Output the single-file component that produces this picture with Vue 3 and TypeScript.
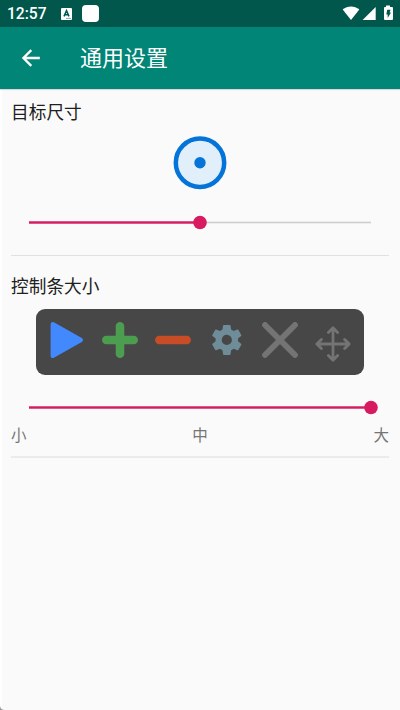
<script setup lang="ts">
import { ref } from 'vue'

const trackLength = 342
const targetSize = ref<number>(50)
const barSize = ref<number>(100)
const sizeLabels: string[] = ['小', '中', '大']

const position = (percent: number): number => (trackLength * percent) / 100
</script>

<template>
  <div class="screen">
    <header class="status">
      <span class="clock">12:57</span>
      <svg class="keyboard" width="11" height="12" viewBox="0 0 11 12">
        <rect width="11" height="12" rx="1" fill="#fff" />
        <path d="M3 8.4 5.5 2.6 8 8.4M3.8 6.7H7.2" fill="none" stroke="#01574b" stroke-width="1.5" />
        <path d="M5 10.4H10" stroke="#01574b" stroke-width=".5" />
      </svg>
      <span class="notice"></span>
      <svg class="signals" width="52" height="17" viewBox="0 0 52 17">
        <path d="M.7 4.6C5.5.3 12.5.3 17.3 4.6L9 15Z" fill="#fff" />
        <path d="M33.7 2V15H20.6Z" fill="#fff" />
        <path d="M44 .6h4v1.5h2q1 0 1 1v11q0 1-1 1h-7q-1 0-1-1v-11q0-1 1-1h1Z" fill="#fff" />
        <path d="M45.2 4.8H48.5L47.6 7.6H49L45.7 13V9.4H44.3Z" fill="#01574b" />
      </svg>
    </header>
    <nav class="appbar">
      <svg width="20" height="20" viewBox="0 0 20 20">
        <path d="M18.8 10H2.8M10.3 2.1 2.4 10 10.3 17.9" fill="none" stroke="#fff" stroke-width="2.3" />
      </svg>
      <h1>通用设置</h1>
    </nav>
    <main>
      <section class="target-section">
        <h2>目标尺寸</h2>
        <svg class="target" width="54" height="54" viewBox="0 0 54 54">
          <circle cx="27" cy="26.7" r="24.2" fill="#e1effb" stroke="#0474d8" stroke-width="4.5" />
          <circle cx="27" cy="26.7" r="5.7" fill="#0474d8" />
        </svg>
        <svg class="slider" viewBox="0 0 342 15">
          <rect y="6.7" :width="trackLength" height="1.6" fill="#cecece" />
          <rect y="6.3" :width="position(targetSize)" height="2.4" fill="#d81b60" />
          <circle :cx="position(targetSize)" cy="7.5" r="6.8" fill="#d81b60" />
        </svg>
      </section>
      <section class="bar-section">
        <h2>控制条大小</h2>
        <div class="panel">
          <svg viewBox="0 0 36 36">
            <path d="M3.8 2.2 31.7 18 3.8 33.8Z" fill="#4189fc" stroke="#4189fc" stroke-width="4.4" stroke-linejoin="round" />
          </svg>
          <svg viewBox="0 0 36 36">
            <path d="M18 4.3V31.7M4.3 18H31.7" stroke="#4c9d50" stroke-width="8.6" stroke-linecap="round" />
          </svg>
          <svg viewBox="0 0 36 36">
            <path d="M4.3 18H31.7" stroke="#c84c26" stroke-width="8.6" stroke-linecap="round" />
          </svg>
          <svg viewBox="0 0 36 36">
            <g transform="translate(-.2 -.1) scale(1.5)">
              <path fill="#6f8c99" d="M19.43 12.98c.04-.32.07-.64.07-.98s-.03-.66-.07-.98l2.11-1.65c.19-.15.24-.42.12-.64l-2-3.46c-.12-.22-.39-.3-.61-.22l-2.49 1c-.52-.4-1.08-.73-1.69-.98l-.38-2.65C14.46 2.18 14.25 2 14 2h-4c-.25 0-.46.18-.49.42l-.38 2.65c-.61.25-1.17.59-1.69.98l-2.49-1c-.23-.09-.49 0-.61.22l-2 3.46c-.13.22-.07.49.12.64l2.11 1.65c-.04.32-.07.65-.07.98s.03.66.07.98l-2.11 1.65c-.19.15-.24.42-.12.64l2 3.46c.12.22.39.3.61.22l2.49-1c.52.4 1.08.73 1.69.98l.38 2.65c.03.24.24.42.49.42h4c.25 0 .46-.18.49-.42l.38-2.65c.61-.25 1.17-.59 1.69-.98l2.49 1c.23.09.49 0 .61-.22l2-3.46c.12-.22.07-.49-.12-.64l-2.11-1.65zM12 15.4a3.4 3.4 0 1 1 0-6.8 3.4 3.4 0 0 1 0 6.8z" />
            </g>
          </svg>
          <svg viewBox="0 0 36 36">
            <path d="M3 3 33 33M33 3 3 33" stroke="#747474" stroke-width="5.8" stroke-linecap="round" />
          </svg>
          <svg class="move" viewBox="0 0 36 36">
            <path d="M18 2V34M2 18H34M13.4 6.4 18 1.8 22.6 6.4M13.4 29.6 18 34.2 22.6 29.6M6.4 13.4 1.8 18 6.4 22.6M29.6 13.4 34.2 18 29.6 22.6" fill="none" stroke="#747474" stroke-width="2.8" stroke-linecap="round" stroke-linejoin="round" />
          </svg>
        </div>
        <svg class="slider" viewBox="0 0 342 15">
          <rect y="6.7" :width="trackLength" height="1.6" fill="#cecece" />
          <rect y="6.3" :width="position(barSize)" height="2.4" fill="#d81b60" />
          <circle :cx="position(barSize)" cy="7.5" r="6.8" fill="#d81b60" />
        </svg>
        <div class="labels">
          <span v-for="label in sizeLabels" :key="label">{{ label }}</span>
        </div>
      </section>
    </main>
    <svg class="corner" width="4" height="4" viewBox="0 0 4 4">
      <path d="M0 0Q.5 3.5 4 4H0Z" fill="#999" />
    </svg>
  </div>
</template>

<style>
body {
  margin: 0;
}
</style>

<style scoped>
.screen {
  position: relative;
  box-sizing: border-box;
  width: 400px;
  height: 710px;
  overflow: hidden;
  background: linear-gradient(90deg, #fff 2px, #fafafa 2px);
  font-family: 'Noto Sans CJK SC', sans-serif;
}
.status {
  display: flex;
  align-items: center;
  box-sizing: border-box;
  height: 27px;
  padding: 0 8px 0 7px;
  background: #01574b;
}
.clock {
  width: 54px;
  padding-top: 2px;
  color: #fff;
  font: 500 15.6px/25px Roboto, sans-serif;
}
.notice {
  width: 17px;
  height: 17px;
  margin-left: 10px;
  border-radius: 4px;
  background: #fff;
}
.signals {
  margin-left: auto;
  margin-right: -2.3px;
}
.appbar {
  display: flex;
  align-items: center;
  box-sizing: border-box;
  height: 62px;
  padding-left: 21px;
  background: #018576;
  box-shadow: 0 1px 1px #0002;
}
h1 {
  margin: 0 0 4px 39px;
  color: #fff;
  font-size: 22px;
  font-weight: 400;
  line-height: 32px;
}
main {
  padding: 0 11px;
}
section {
  display: flex;
  flex-direction: column;
  box-sizing: border-box;
}
.target-section {
  height: 167px;
  padding-top: 9px;
  border-bottom: 1px solid #e1e1e1;
}
.bar-section {
  height: 202px;
  padding-top: 16px;
  border-bottom: 2px solid #ebebeb;
}
h2 {
  margin: 0;
  color: #202020;
  font-size: 17.7px;
  font-weight: 400;
  line-height: 26px;
}
.target {
  align-self: center;
  margin-top: 12px;
}
.slider {
  align-self: center;
  flex-shrink: 0;
  width: 342px;
  height: 15px;
  margin-top: 25px;
  overflow: visible;
}
.panel {
  display: flex;
  align-items: center;
  align-self: center;
  justify-content: space-between;
  box-sizing: border-box;
  width: 328.6px;
  height: 66.3px;
  margin-top: 10.7px;
  padding: 0 13px 4px;
  border-radius: 9px;
  background: #474747;
}
.panel svg {
  width: 36px;
  height: 36px;
}
.panel .move {
  margin-top: 8px;
}
.labels {
  display: flex;
  justify-content: space-between;
  margin-top: 8px;
  color: #757575;
  font-size: 15.5px;
  line-height: 23px;
}
.corner {
  position: absolute;
  bottom: 0;
  left: 0;
}
</style>
